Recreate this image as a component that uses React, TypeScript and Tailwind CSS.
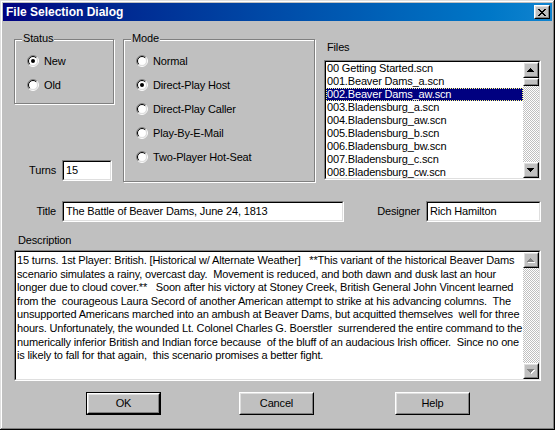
import React from "react";

const F = "font-['Liberation_Sans',Arial,sans-serif]";

type P = { className?: string; children?: React.ReactNode };

function Raised({ className = "", children }: P) {
  return (
    <div className={`border border-t-white border-l-white border-r-black border-b-black ${className}`}>
      <div className="flex h-full w-full items-center justify-center border border-t-[#dfdfdf] border-l-[#dfdfdf] border-r-[#808080] border-b-[#808080] bg-[#c0c0c0]">
        {children}
      </div>
    </div>
  );
}

function Sunken({ className = "", inner = "", children }: P & { inner?: string }) {
  return (
    <div className={`border border-t-[#808080] border-l-[#808080] border-r-white border-b-white ${className}`}>
      <div className={`h-full w-full border border-t-black border-l-black border-r-[#dfdfdf] border-b-[#dfdfdf] bg-white ${inner}`}>
        {children}
      </div>
    </div>
  );
}

function Arrow({ up, disabled }: { up: boolean; disabled?: boolean }) {
  const rows = up
    ? [
        [3, 1],
        [2, 3],
        [1, 5],
        [0, 7],
      ]
    : [
        [0, 7],
        [1, 5],
        [2, 3],
        [3, 1],
      ];
  return (
    <svg width="8" height="5" viewBox="0 0 8 5" shapeRendering="crispEdges">
      {disabled &&
        rows.map(([x, w], i) => <rect key={"s" + i} x={x + 1} y={i + 1} width={w} height={1} fill="#fff" />)}
      {rows.map(([x, w], i) => (
        <rect key={i} x={x} y={i} width={w} height={1} fill={disabled ? "#808080" : "#000"} />
      ))}
    </svg>
  );
}

function VScroll({ thumb, disabled }: { thumb?: boolean; disabled?: boolean }) {
  return (
    <div className="flex h-full w-[16px] shrink-0 flex-col">
      <Raised className="h-[16px] w-[16px] shrink-0">
        <Arrow up disabled={disabled} />
      </Raised>
      {thumb && <Raised className="h-[8px] w-[16px] shrink-0" />}
      <div className="flex-1 bg-[image:repeating-conic-gradient(#c0c0c0_0%_25%,#fff_0%_50%)] bg-[length:2px_2px]" />
      <Raised className="h-[16px] w-[16px] shrink-0">
        <Arrow up={false} disabled={disabled} />
      </Raised>
    </div>
  );
}

function Radio({ label, checked }: { label: string; checked?: boolean }) {
  return (
    <div className="flex h-[24px] items-center gap-[5px]">
      <svg width="12" height="12" viewBox="0 0 12 12">
        <circle cx="6" cy="6" r="4.5" fill="#fff" />
        <path d="M2.111 9.889 A5.5 5.5 0 0 1 9.889 2.111" fill="none" stroke="#808080" />
        <path d="M9.889 2.111 A5.5 5.5 0 0 1 2.111 9.889" fill="none" stroke="#fff" />
        <path d="M2.818 9.182 A4.5 4.5 0 0 1 9.182 2.818" fill="none" stroke="#000" />
        <path d="M9.182 2.818 A4.5 4.5 0 0 1 2.818 9.182" fill="none" stroke="#dfdfdf" />
        {checked && <circle cx="6" cy="6" r="2" fill="#000" />}
      </svg>
      <span className="leading-[13px]">{label}</span>
    </div>
  );
}

function GroupBox({ label, className = "", children }: P & { label: string }) {
  return (
    <div className={`relative border border-[#808080] shadow-[1px_1px_0_#fff,inset_1px_1px_0_#fff] ${className}`}>
      <span className="absolute -top-[8px] left-[7px] bg-[#c0c0c0] px-[1px] leading-[13px]">{label}</span>
      {children}
    </div>
  );
}

function CloseGlyph() {
  const r: [number, number][][] = [
    [[0, 2], [6, 2]],
    [[1, 2], [5, 2]],
    [[2, 4]],
    [[3, 2]],
    [[2, 4]],
    [[1, 2], [5, 2]],
    [[0, 2], [6, 2]],
  ];
  return (
    <svg width="8" height="7" viewBox="0 0 8 7" shapeRendering="crispEdges">
      {r.map((row, y) => row.map(([x, w], j) => <rect key={y + "-" + j} x={x} y={y} width={w} height={1} fill="#000" />))}
    </svg>
  );
}

const files = [
  "00 Getting Started.scn",
  "001.Beaver Dams_a.scn",
  "002.Beaver Dams_aw.scn",
  "003.Bladensburg_a.scn",
  "004.Bladensburg_aw.scn",
  "005.Bladensburg_b.scn",
  "006.Bladensburg_bw.scn",
  "007.Bladensburg_c.scn",
  "008.Bladensburg_cw.scn",
];

const desc = [
  "15 turns. 1st Player: British. [Historical w/ Alternate Weather]   **This variant of the historical Beaver Dams",
  "scenario simulates a rainy, overcast day.  Movement is reduced, and both dawn and dusk last an hour",
  "longer due to cloud cover.**   Soon after his victory at Stoney Creek, British General John Vincent learned",
  "from the  courageous Laura Secord of another American attempt to strike at his advancing columns.  The",
  "unsupported Americans marched into an ambush at Beaver Dams, but acquitted themselves  well for three",
  "hours. Unfortunately, the wounded Lt. Colonel Charles G. Boerstler  surrendered the entire command to the",
  "numerically inferior British and Indian force because  of the bluff of an audacious Irish officer.  Since no one",
  "is likely to fall for that again,  this scenario promises a better fight.",
];

export default function App() {
  return (
    <div
      className={`h-[430px] w-[555px] overflow-hidden bg-[#c0c0c0] p-[3px] text-[11px] leading-[13px] tracking-[-0.16px] text-black shadow-[inset_-1px_-1px_0_#000,inset_1px_1px_0_#dfdfdf,inset_-2px_-2px_0_#808080,inset_2px_2px_0_#fff] ${F}`}
    >
      {/* Title bar */}
      <div className="flex h-[18px] items-center justify-between bg-linear-to-r from-[#000080] to-[#1084d0] pl-[3px] pr-[2px]">
        <span className="text-[12px] font-bold leading-[14px] tracking-normal text-white">File Selection Dialog</span>
        <Raised className="h-[14px] w-[16px]">
          <CloseGlyph />
        </Raised>
      </div>

      {/* Top section */}
      <div className="flex pl-[11px]">
        <div className="flex w-[100px] flex-col">
          <GroupBox label="Status" className="mt-[18px] h-[65px] w-[100px] pl-[12px] pt-[9px]">
            <Radio label="New" checked />
            <Radio label="Old" />
          </GroupBox>
          <div className="mt-[56px] flex h-[21px] items-center">
            <span className="w-[42px] text-right">Turns</span>
            <Sunken className="ml-[6px] h-[21px] w-[50px]" inner="flex items-center pl-[2px]">
              15
            </Sunken>
          </div>
        </div>
        <div className="ml-[9px] w-[192px]">
          <GroupBox label="Mode" className="mt-[18px] h-[143px] w-[192px] pl-[12px] pt-[9px]">
            <Radio label="Normal" />
            <Radio label="Direct-Play Host" checked />
            <Radio label="Direct-Play Caller" />
            <Radio label="Play-By-E-Mail" />
            <Radio label="Two-Player Hot-Seat" />
          </GroupBox>
        </div>
        <div className="ml-[9px] w-[217px]">
          <div className="mt-[20px] pl-[3px]">Files</div>
          <Sunken className="mt-[6px] h-[120px] w-[217px]" inner="flex overflow-hidden">
            <div className="flex-1 overflow-hidden">
              {files.map((f, i) =>
                i === 2 ? (
                  <div
                    key={f}
                    className="h-[13px] whitespace-nowrap bg-[#000080] pl-[1px] text-white outline-1 -outline-offset-1 outline-dotted outline-[#ffff80]"
                  >
                    {f}
                  </div>
                ) : (
                  <div key={f} className="h-[13px] whitespace-nowrap pl-[1px]">
                    {f}
                  </div>
                )
              )}
            </div>
            <VScroll thumb />
          </Sunken>
        </div>
      </div>

      {/* Title / Designer */}
      <div className="mt-[19px] flex h-[21px] items-center">
        <span className="w-[53px] text-right">Title</span>
        <Sunken className="ml-[6px] h-[21px] w-[282px]" inner="flex items-center pl-[2px] whitespace-nowrap">
          The Battle of Beaver Dams, June 24, 1813
        </Sunken>
        <span className="w-[76px] text-right">Designer</span>
        <Sunken className="ml-[6px] h-[21px] w-[115px]" inner="flex items-center pl-[2px] whitespace-nowrap">
          Rich Hamilton
        </Sunken>
      </div>

      {/* Description */}
      <div className="ml-[15px] mt-[12px]">Description</div>
      <Sunken className="ml-[11px] mt-[3px] h-[131px] w-[527px]" inner="flex overflow-hidden">
        <div className="flex-1 overflow-hidden pl-[1px] pt-[2px] leading-[13.6px]">
          {desc.map((l, i) => (
            <div key={i} className="whitespace-pre">
              {l}
            </div>
          ))}
        </div>
        <VScroll disabled />
      </Sunken>

      {/* Buttons */}
      <div className="mt-[11px] flex h-[23px]">
        <div className="ml-[83px] h-[23px] w-[75px] border border-black">
          <Raised className="h-full w-full">OK</Raised>
        </div>
        <Raised className="ml-[78px] h-[23px] w-[75px]">Cancel</Raised>
        <Raised className="ml-[81px] h-[23px] w-[75px]">Help</Raised>
      </div>
    </div>
  );
}
